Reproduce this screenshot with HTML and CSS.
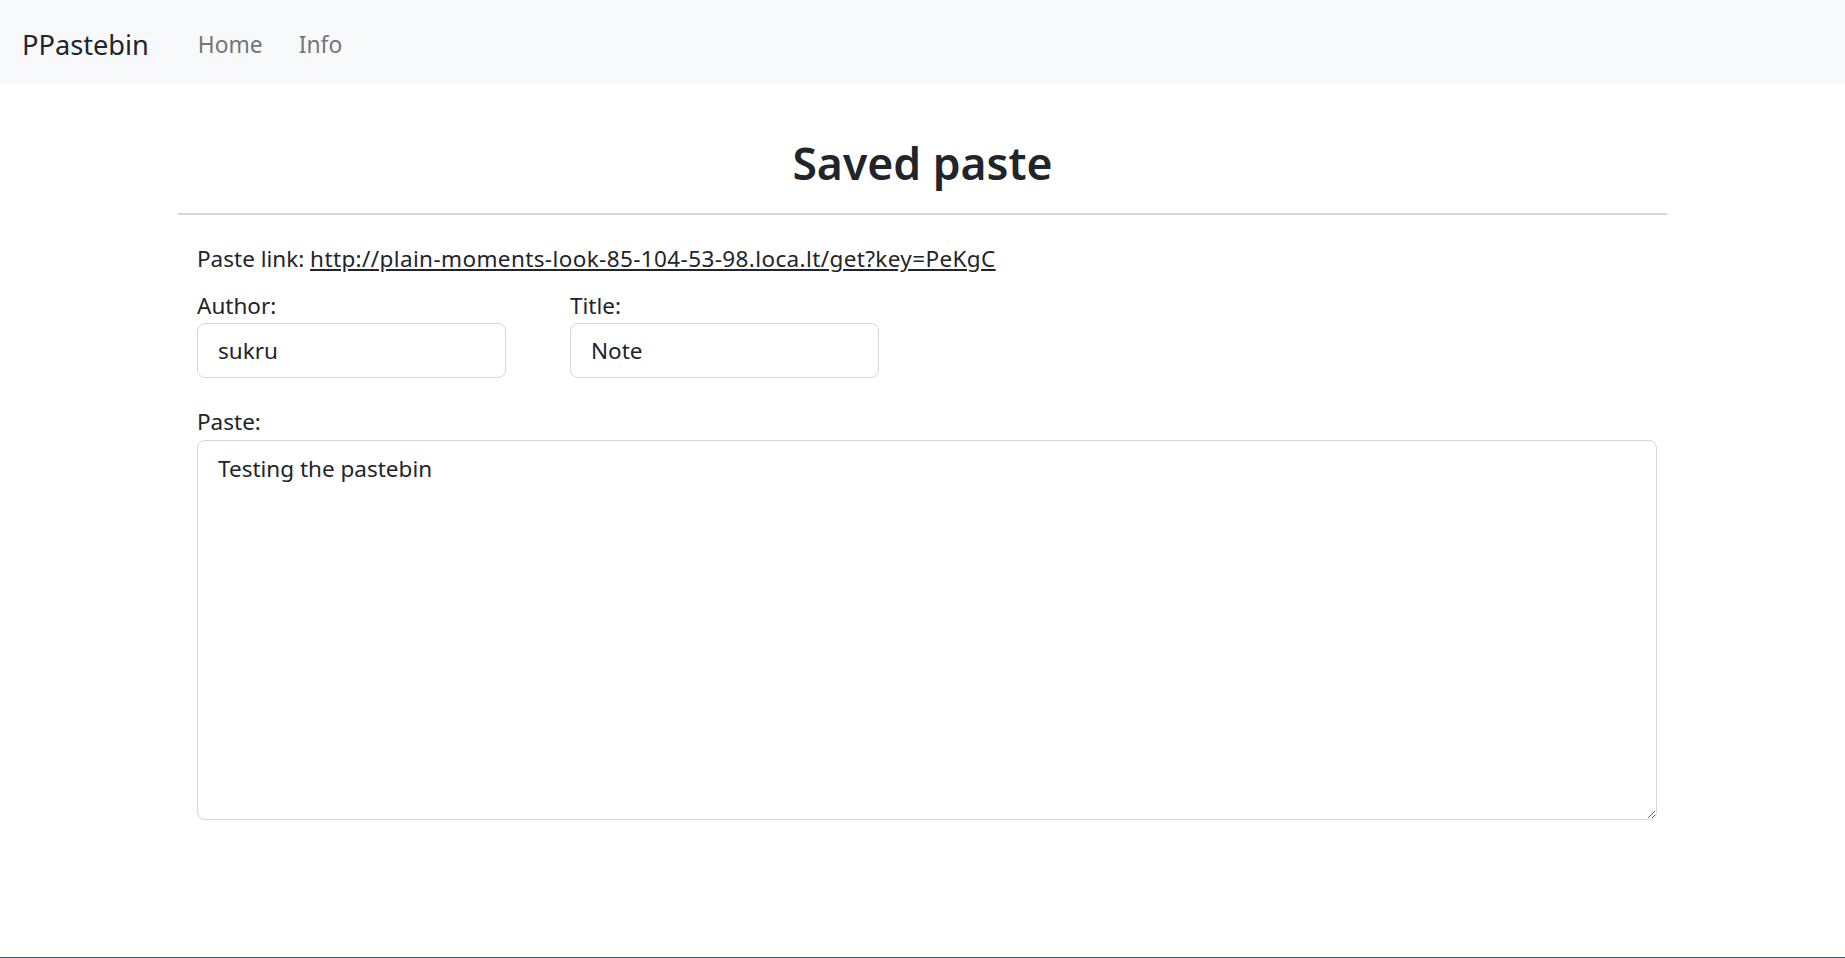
FILE: index.html
```html
<!DOCTYPE html>
<html lang="en">
<head>
<meta charset="utf-8">
<title>PPastebin</title>
<link rel="stylesheet" href="styles.css">
</head>
<body>
<nav class="navbar">
  <a class="brand" href="#">PPastebin</a>
  <ul class="nav-links">
    <li><a href="#">Home</a></li>
    <li><a href="#">Info</a></li>
  </ul>
</nav>
<main class="container">
  <h1 class="page-title">Saved paste</h1>
  <hr class="divider">
  <form class="paste-form">
    <p class="paste-link">Paste link: <a href="#">http://plain-moments-look-85-104-53-98.loca.lt/get?key=PeKgC</a></p>
    <div class="fields-row">
      <div class="field">
        <label class="field-label" for="author">Author:</label>
        <input class="field-input" id="author" type="text" value="sukru">
      </div>
      <div class="field">
        <label class="field-label" for="title">Title:</label>
        <input class="field-input" id="title" type="text" value="Note">
      </div>
    </div>
    <div class="field field-paste">
      <label class="field-label" for="paste">Paste:</label>
      <textarea class="field-textarea" id="paste">Testing the pastebin</textarea>
    </div>
  </form>
</main>
<div class="window-edge"></div>
</body>
</html>
```

FILE: styles.css
```css
html, body {
  margin: 0;
  padding: 0;
}
body {
  min-height: 100vh;
  display: flex;
  flex-direction: column;
  font-family: "Noto Sans", "Open Sans", sans-serif;
  color: #212529;
  background: #fff;
}
.navbar {
  height: 84px;
  background: #f8f9fa;
  display: flex;
  align-items: center;
  padding-left: 22px;
  padding-top: 5px;
  box-sizing: border-box;
}
.brand {
  font-size: 27.2px;
  color: #212529;
  text-decoration: none;
  margin-right: 49px;
}
.nav-links {
  list-style: none;
  margin: 0;
  padding: 0;
  display: flex;
  gap: 36px;
}
.nav-links a {
  font-size: 22.8px;
  color: #737475;
  text-decoration: none;
}
.container {
  width: 1489px;
  margin: 0 auto;
  flex: 1;
}
.page-title {
  text-align: center;
  font-size: 44.5px;
  font-weight: 560;
  line-height: 1.2;
  margin: 52px 0 0;
}
.divider {
  border: 0;
  border-top: 2px solid #d6d7d8;
  margin: 24px 0 0;
}
.paste-form {
  padding: 0 10px 0 19px;
}
.paste-link {
  font-size: 22.5px;
  line-height: 30px;
  margin: 29px 0 0;
}
.paste-link a {
  color: #212529;
  letter-spacing: 0.38px;
}
.fields-row {
  display: flex;
  gap: 64px;
  margin-top: 17px;
}
.field {
  display: flex;
  flex-direction: column;
}
.field-label {
  font-size: 22.5px;
  line-height: 30px;
  margin-bottom: 2px;
}
.field-input {
  width: 309px;
  height: 55px;
  box-sizing: border-box;
  border: 1px solid #d3d7dc;
  border-radius: 8px;
  padding: 0 20px;
  font-family: inherit;
  font-size: 22.5px;
  color: #212529;
}
.field-paste {
  margin-top: 29px;
}
.field-paste .field-label {
  margin-bottom: 3px;
}
.field-textarea {
  height: 380px;
  box-sizing: border-box;
  border: 1px solid #d3d7dc;
  border-radius: 8px;
  padding: 11px 20px;
  font-family: inherit;
  font-size: 22.5px;
  line-height: 1.5;
  color: #212529;
  resize: vertical;
}
.window-edge {
  height: 1px;
  background: #3d5a85;
}
```
